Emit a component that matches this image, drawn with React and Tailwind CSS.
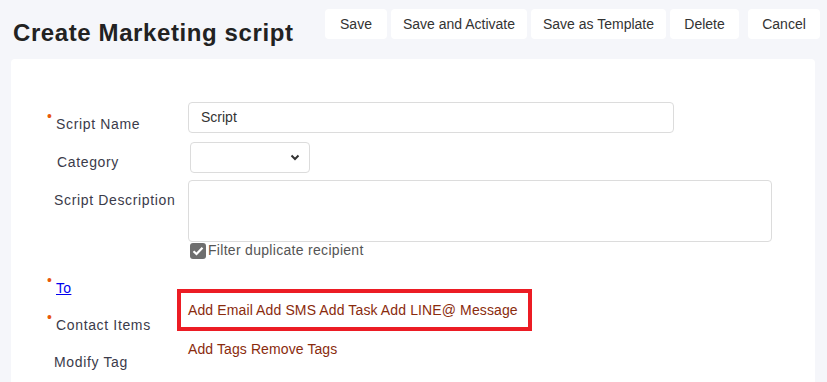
import React from "react";

function Label({ children, req, className = "" }) {
  return (
    <div className={"w-[133px] shrink-0 text-[14px] leading-4 text-[#3b3b4a] tracking-[0.65px] " + className}>
      <span className="relative">
        {req && <span className="absolute left-[-9px] top-[-7px] text-[14px] leading-none text-[#e8590c]">•</span>}
        {children}
      </span>
    </div>
  );
}

export default function App() {
  const font = { fontFamily: '"Liberation Sans", Arial, sans-serif' };
  return (
    <div className="min-h-[382px] w-[827px] bg-[#f5f6fa] overflow-hidden" style={font}>
      <div className="flex h-[59px] items-start justify-between pl-[13px] pr-[7px] pt-[9px]">
        <h1 className="mt-[11px] text-[24px] leading-[26px] font-bold text-[#222] tracking-[0.6px]">Create Marketing script</h1>
        <div className="flex text-[14px] text-[#333]">
          <button className="h-[30px] w-[62px] rounded bg-white">Save</button>
          <button className="ml-[4px] h-[30px] w-[136px] rounded bg-white">Save and Activate</button>
          <button className="ml-[4px] h-[30px] w-[135px] rounded bg-white">Save as Template</button>
          <button className="ml-[4px] h-[30px] w-[69px] rounded bg-white">Delete</button>
          <button className="ml-[9px] h-[30px] w-[72px] rounded bg-white">Cancel</button>
        </div>
      </div>
      <div className="ml-[11px] mr-[12px] h-[330px] rounded-t bg-white pl-[44px] pt-[43px]">
        {/* Script Name */}
        <div className="flex h-[40px]">
          <Label req className="pt-[14px] pl-[1px]">Script Name</Label>
          <div className="flex h-[31px] w-[486px] items-center rounded border border-[#dcdcdc] px-[12px] text-[14px] text-[#333]">Script</div>
        </div>
        {/* Category */}
        <div className="flex h-[38px]">
          <Label className="pt-[12px] pl-[2px]">Category</Label>
          <div className="ml-[2px] flex h-[31px] w-[120px] items-center justify-end rounded border border-[#dcdcdc] pr-[9px]">
            <svg width="10" height="7" viewBox="0 0 10 7"><path d="M1.5 1.5 L5 5 L8.5 1.5" fill="none" stroke="#333" strokeWidth="2" /></svg>
          </div>
        </div>
        {/* Script Description */}
        <div className="flex">
          <Label className="pt-[12px] ml-[-1px] !w-[134px]">Script Description</Label>
          <div className="flex flex-col">
            <div className="h-[62px] w-[584px] rounded border border-[#dcdcdc]"></div>
            <div className="mt-[1px] flex items-center text-[14px] text-[#555] tracking-[0.3px]">
              <span className="ml-[2px] flex h-[16px] w-[16px] items-center justify-center rounded-[3px] bg-[#6e6e6e]">
                <svg width="12" height="10" viewBox="0 0 12 10"><path d="M1.5 5.2 L4.5 8 L10.5 1.8" fill="none" stroke="#fff" strokeWidth="2.2" /></svg>
              </span>
              <span className="ml-[2px] leading-4 -translate-y-[1px]">Filter duplicate recipient</span>
            </div>
          </div>
        </div>
        {/* To */}
        <div className="flex h-[31px]">
          <Label req className="pt-[21px] pl-[1px]"><span className="text-[#0000ee] underline tracking-[0.3px]">To</span></Label>
        </div>
        {/* Contact Items */}
        <div className="flex h-[41px]">
          <Label req className="pt-[27px] pl-[1px]">Contact Items</Label>
          <div className="ml-[-11px] mt-[-1px] flex h-[42px] w-[355px] items-center border-4 border-[#ec1c24] pl-[7px] text-[14px] text-[#8a2b0d] tracking-[0.12px]">
            Add Email Add SMS Add Task Add LINE@ Message
          </div>
        </div>
        {/* Modify Tag */}
        <div className="flex">
          <Label className="pt-[23px] ml-[-1px] !w-[134px]">Modify Tag</Label>
          <div className="pt-[10px] text-[14px] leading-4 text-[#8a2b0d] tracking-[0.1px]">Add Tags Remove Tags</div>
        </div>
      </div>
    </div>
  );
}
